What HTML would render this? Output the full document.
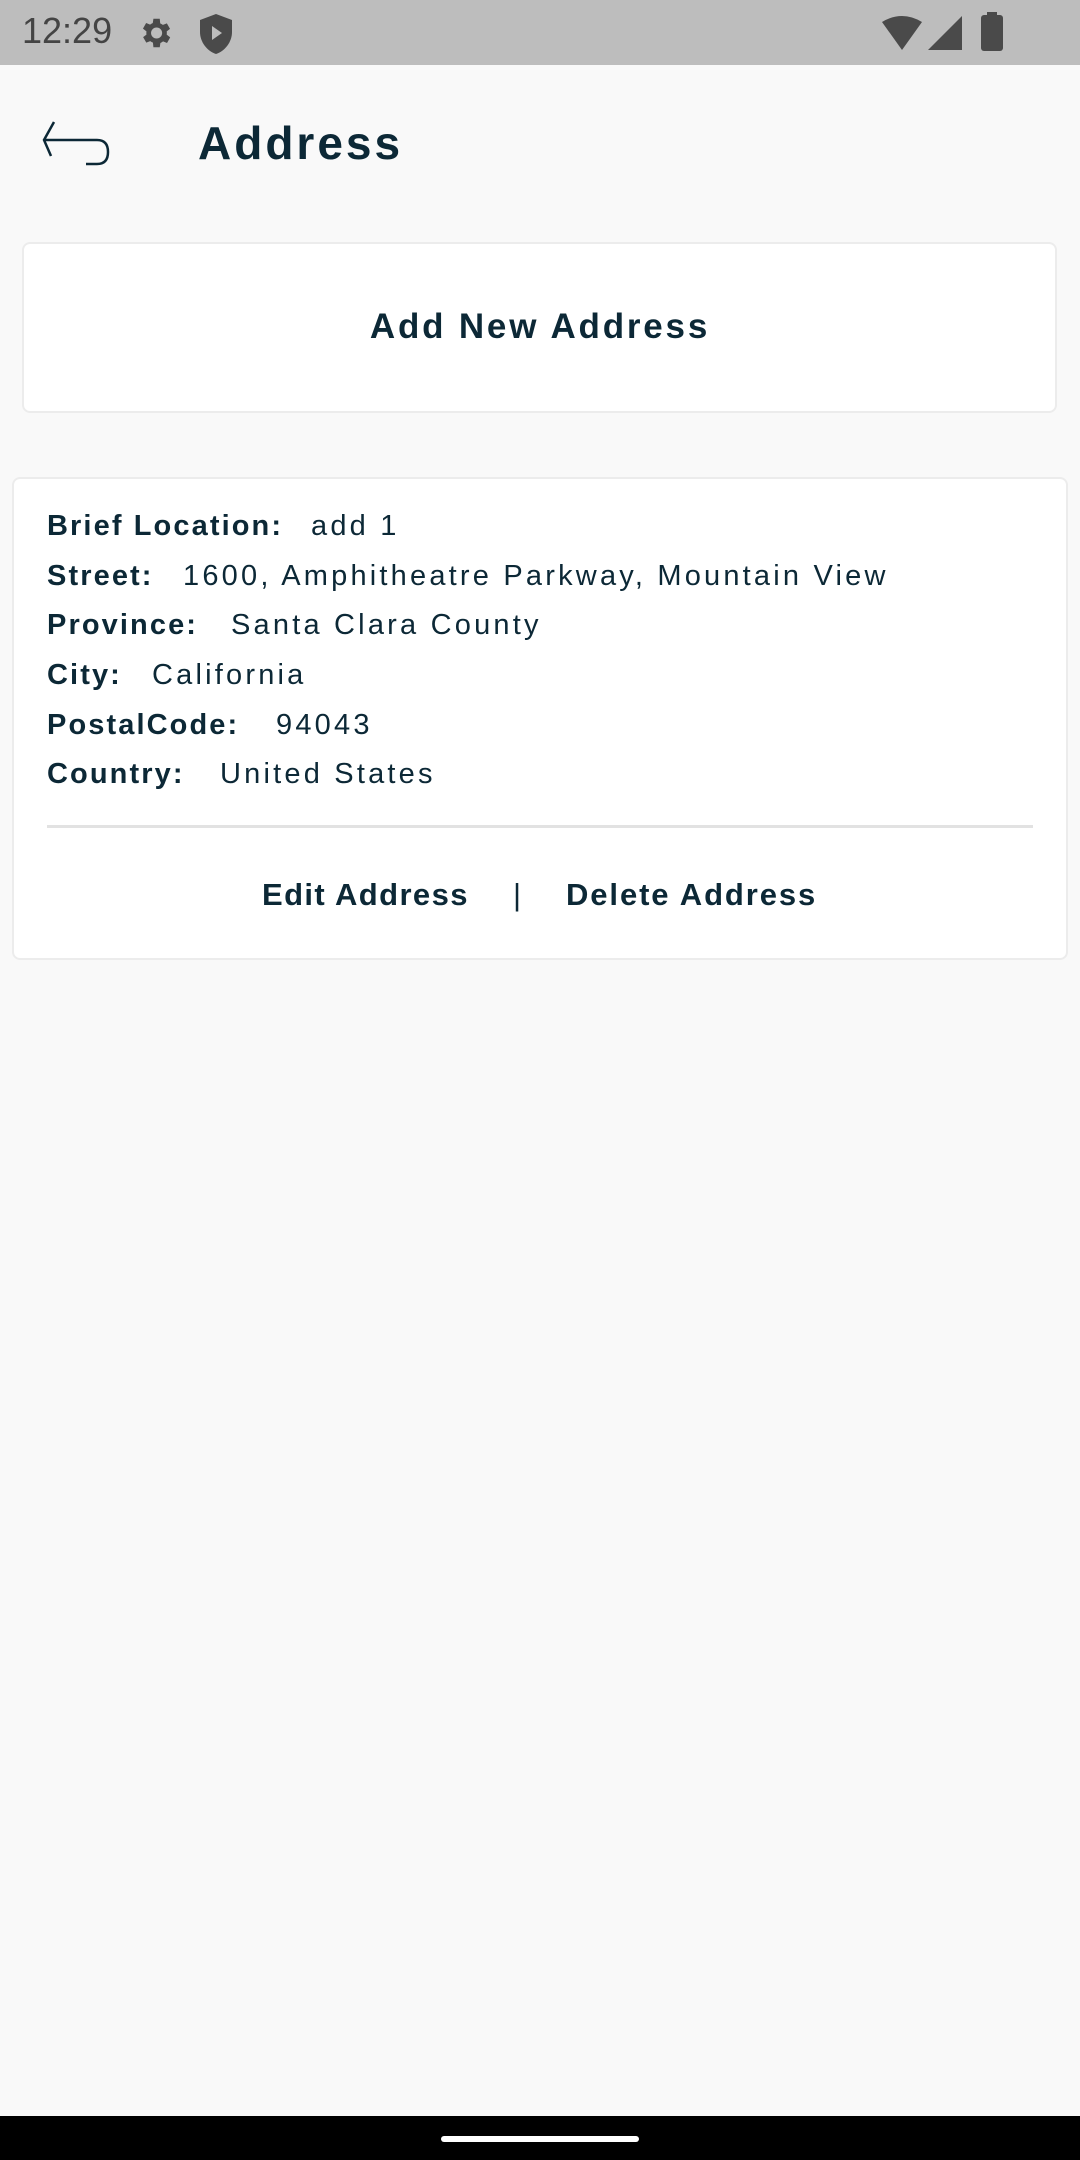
<!DOCTYPE html>
<html><head><meta charset="utf-8"><style>
*{margin:0;padding:0;box-sizing:border-box}
body{width:1080px;height:2160px;background:#f9f9f9;position:relative;overflow:hidden;font-family:"Liberation Sans",sans-serif;color:#0c2836}
.abs{position:absolute;white-space:nowrap}
.lbl{font-weight:bold;font-size:29px;letter-spacing:2.1px}
.val{font-size:29px;letter-spacing:3.2px}
</style></head><body>
<div class="abs" style="left:0;top:0;width:1080px;height:65px;background:#bdbdbd"></div>
<div class="abs" style="left:22px;top:10px;font-size:36px;color:#444">12:29</div>
<svg class="abs" style="left:136px;top:14px" width="38" height="38" viewBox="0 0 24 24"><path fill="#4a4a4a" d="M19.4 13a7.5 7.5 0 0 0 0-2l2.1-1.6-2-3.5-2.5 1a7 7 0 0 0-1.7-1L15 3h-4l-.4 2.7a7 7 0 0 0-1.7 1l-2.5-1-2 3.5L6.6 11a7.5 7.5 0 0 0 0 2l-2.1 1.6 2 3.5 2.5-1a7 7 0 0 0 1.7 1L11 21h4l.4-2.7a7 7 0 0 0 1.7-1l2.5 1 2-3.5zM13 15.5A3.5 3.5 0 1 1 13 8.5a3.5 3.5 0 0 1 0 7z"/></svg>
<svg class="abs" style="left:200px;top:14px" width="32" height="40" viewBox="0 0 16 20"><path fill="#4a4a4a" d="M8 0L0 3v6c0 5 3.5 9.5 8 11 4.5-1.5 8-6 8-11V3z"/><path fill="#bdbdbd" d="M6 6v7l5-3.5z"/></svg>
<svg class="abs" style="left:882px;top:16px" width="40" height="36" viewBox="0 0 40 36"><path fill="#4a4a4a" d="M0 6Q20-6 40 6L20 34z"/></svg>
<svg class="abs" style="left:928px;top:16px" width="34" height="36" viewBox="0 0 34 36"><path fill="#4a4a4a" d="M34 0V34H0z"/></svg>
<div class="abs" style="left:981px;top:15px;width:22px;height:36px;background:#4a4a4a;border-radius:3px"></div>
<div class="abs" style="left:987px;top:12px;width:10px;height:5px;background:#4a4a4a"></div>

<svg class="abs" style="left:42px;top:118px" width="72" height="50" viewBox="0 0 72 50"><path d="M12 4L2 22L9 38M3 22H55Q66 22 66 34Q66 46 55 46H44" fill="none" stroke="#0c2836" stroke-width="2.5"/></svg>
<div class="abs" style="left:198px;top:116px;font-size:46px;font-weight:bold;letter-spacing:3px">Address</div>

<div class="abs" style="left:22px;top:242px;width:1035px;height:171px;background:#fff;border:2px solid #ececec;border-radius:8px"></div>
<div class="abs" style="left:0;width:1080px;top:307px;text-align:center;font-size:35px;font-weight:bold;letter-spacing:2.8px">Add New Address</div>

<div class="abs" style="left:12px;top:477px;width:1056px;height:483px;background:#fff;border:2px solid #ececec;border-radius:8px"></div>
<div class="abs lbl" style="left:47px;top:510px">Brief Location:</div><div class="abs val" style="left:311px;top:510px">add 1</div>
<div class="abs lbl" style="left:47px;top:560px">Street:</div><div class="abs val" style="left:183px;top:560px">1600, Amphitheatre Parkway, Mountain View</div>
<div class="abs lbl" style="left:47px;top:609px">Province:</div><div class="abs val" style="left:231px;top:609px">Santa Clara County</div>
<div class="abs lbl" style="left:47px;top:659px">City:</div><div class="abs val" style="left:152px;top:659px">California</div>
<div class="abs lbl" style="left:47px;top:709px">PostalCode:</div><div class="abs val" style="left:276px;top:709px">94043</div>
<div class="abs lbl" style="left:47px;top:758px">Country:</div><div class="abs val" style="left:220px;top:758px">United States</div>
<div class="abs" style="left:47px;top:825px;width:986px;height:3px;background:#e2e2e2"></div>
<div class="abs lbl" style="left:262px;top:877px;font-size:31px;letter-spacing:1.4px">Edit Address</div>
<div class="abs" style="left:513px;top:877px;font-size:31px">|</div>
<div class="abs lbl" style="left:566px;top:877px;font-size:31px;letter-spacing:1.9px">Delete Address</div>

<div class="abs" style="left:0;top:2116px;width:1080px;height:44px;background:#000"></div>
<div class="abs" style="left:441px;top:2136px;width:198px;height:6px;background:#fff;border-radius:3px"></div>
</body></html>
